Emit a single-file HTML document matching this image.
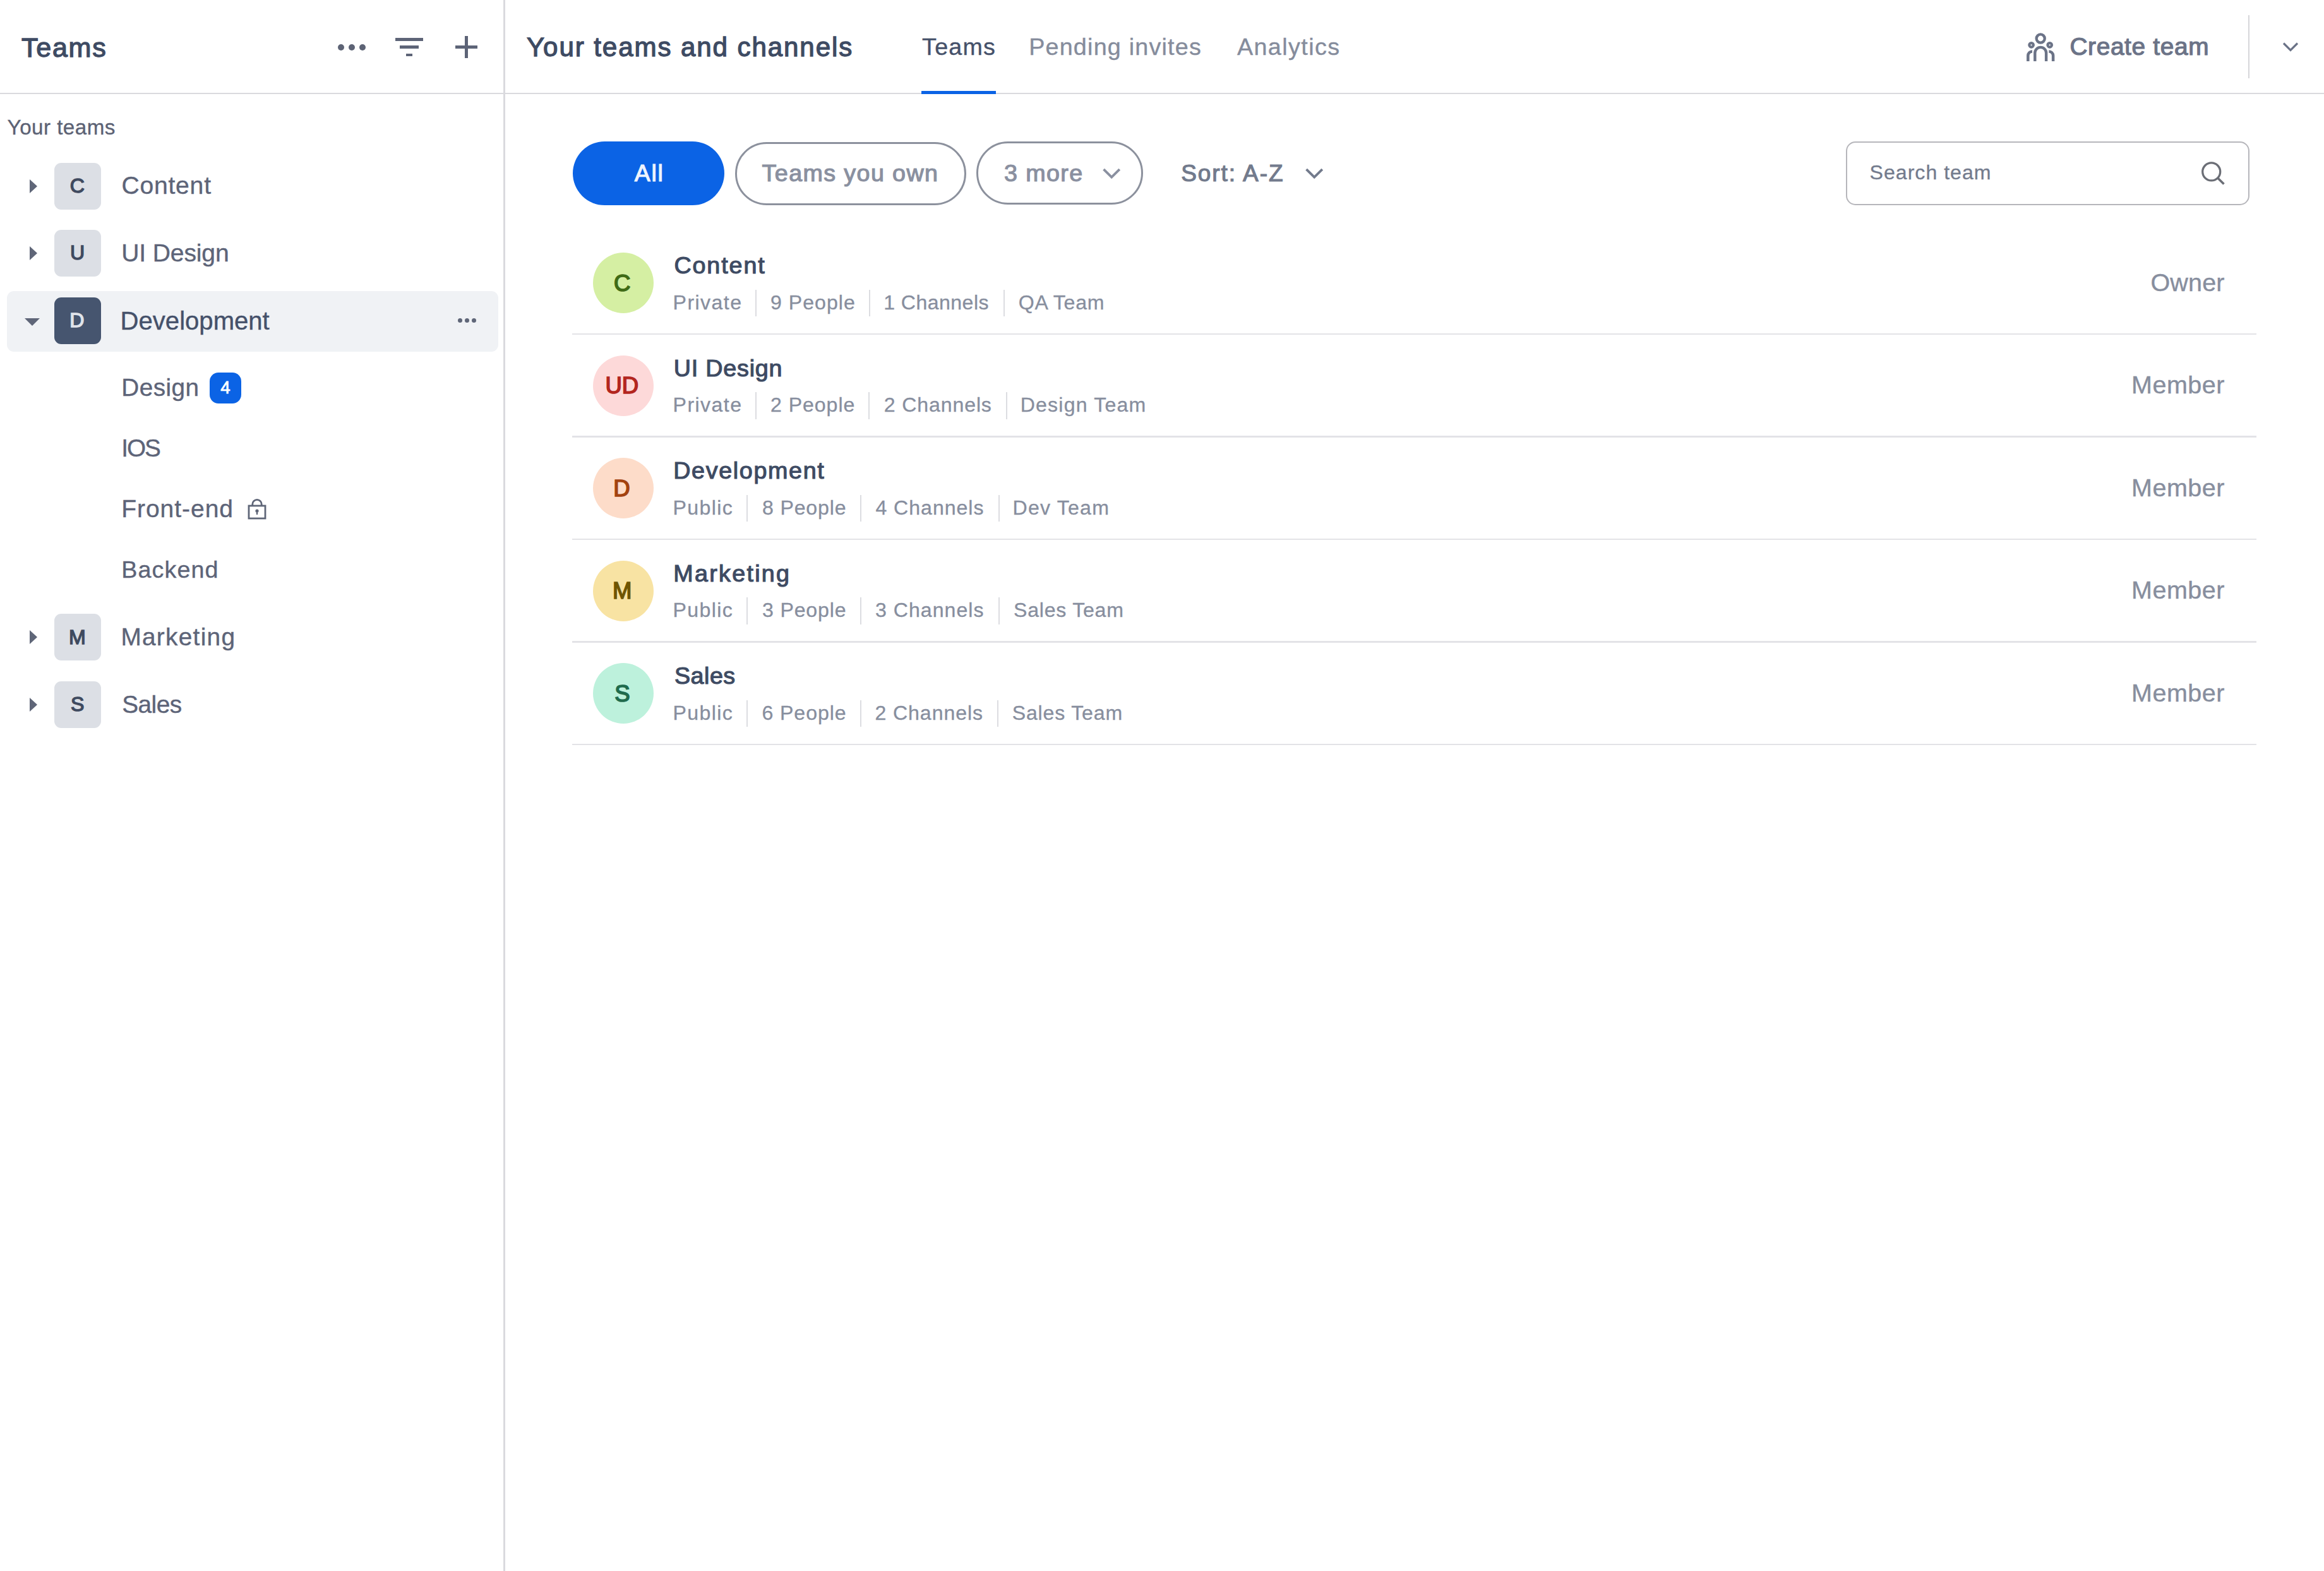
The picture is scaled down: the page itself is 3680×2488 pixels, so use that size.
<!DOCTYPE html>
<html><head><meta charset="utf-8">
<style>
html,body{margin:0;padding:0;background:#fff}
body{width:3680px;height:2488px;position:relative;overflow:hidden;font-family:"Liberation Sans",sans-serif}
.t{position:absolute;white-space:nowrap;display:block}
.a{position:absolute}
.sq{position:absolute;left:85.5px;width:74.3px;height:74.3px;border-radius:11px;background:#dcdfe5}
.tri{position:absolute;left:46.5px;width:0;height:0;border-top:11.5px solid transparent;border-bottom:11.5px solid transparent;border-left:12.5px solid #5f6678}
.av{position:absolute;left:939px;width:96px;height:96px;border-radius:50%}
.sep{position:absolute;width:2px;height:42.6px;background:#dcdde1}
.rl{position:absolute;left:906px;width:2667px;height:2.5px;background:#e3e3e7}
.dot{position:absolute;border-radius:50%;background:#5d6375}
.pill{position:absolute;box-sizing:border-box;border-radius:60px}
</style></head><body>
<!-- borders -->
<div class="a" style="left:0;top:146.5px;width:3680px;height:2.5px;background:#dadade"></div>
<div class="a" style="left:797.3px;top:0;width:2.5px;height:2488px;background:#dadade"></div>

<!-- sidebar header icons -->
<div class="dot" style="left:535.2px;top:69.6px;width:10px;height:10px"></div>
<div class="dot" style="left:552.2px;top:69.6px;width:10px;height:10px"></div>
<div class="dot" style="left:569.4px;top:69.6px;width:10px;height:10px"></div>
<div class="a" style="left:626px;top:60px;width:44px;height:4.8px;background:#5d6477"></div>
<div class="a" style="left:633px;top:72px;width:30px;height:4.8px;background:#5d6477"></div>
<div class="a" style="left:643px;top:84.6px;width:10px;height:4.8px;background:#5d6477"></div>
<div class="a" style="left:721px;top:72.2px;width:35px;height:4.8px;background:#5d6477"></div>
<div class="a" style="left:736.2px;top:57.4px;width:4.8px;height:34.4px;background:#5d6477"></div>

<!-- sidebar rows -->
<div class="tri" style="top:283.5px"></div>
<div class="sq" style="top:257.6px"></div>
<div class="tri" style="top:390px"></div>
<div class="sq" style="top:364px"></div>
<div class="a" style="left:11px;top:461px;width:778px;height:95.5px;border-radius:11px;background:#f0f2f5"></div>
<div class="a" style="left:38.6px;top:503.7px;width:0;height:0;border-left:12px solid transparent;border-right:12px solid transparent;border-top:12.7px solid #5f6678"></div>
<div class="sq" style="top:470.5px;background:#46556f"></div>
<div class="dot" style="left:725px;top:504.3px;width:7.2px;height:7.2px;background:#5f6678"></div>
<div class="dot" style="left:735.9px;top:504.3px;width:7.2px;height:7.2px;background:#5f6678"></div>
<div class="dot" style="left:746.8px;top:504.3px;width:7.2px;height:7.2px;background:#5f6678"></div>
<div class="a" style="left:332px;top:590.1px;width:50px;height:48.6px;border-radius:14px;background:#0b63e5"></div>
<svg class="a" style="left:390px;top:787px" width="34" height="38" viewBox="0 0 34 38">
  <path d="M9.8 13.5 V11.5 a7.2 7.2 0 0 1 14.4 0 V13.5" fill="none" stroke="#5f6678" stroke-width="2.8"/>
  <rect x="4" y="14" width="26" height="20" fill="none" stroke="#5f6678" stroke-width="2.8"/>
  <circle cx="17" cy="22" r="2.6" fill="#5f6678"/>
  <rect x="15.8" y="22" width="2.4" height="6" fill="#5f6678"/>
</svg>
<div class="tri" style="top:998px"></div>
<div class="sq" style="top:972.1px"></div>
<div class="tri" style="top:1104.5px"></div>
<div class="sq" style="top:1078.8px"></div>

<!-- main header -->
<div class="a" style="left:1458.6px;top:144px;width:118.4px;height:5.3px;background:#0b63e5"></div>
<svg class="a" style="left:3200px;top:45px" width="60" height="60" viewBox="0 0 60 60">
  <g fill="none" stroke="#6b7387">
    <circle cx="31.2" cy="16" r="6.55" stroke-width="4.3"/>
    <circle cx="16.6" cy="26.3" r="3.25" stroke-width="4.2"/>
    <circle cx="45.7" cy="26.3" r="3.25" stroke-width="4.2"/>
    <path d="M22.3 52 V38.75 A8.85 8.85 0 0 1 40.1 38.75 V52" stroke-width="4.4"/>
    <path d="M11.3 52 V43.1 A6.7 6.7 0 0 1 18 36.4" stroke-width="4.5"/>
    <path d="M51.1 52 V43.1 A6.7 6.7 0 0 0 44.4 36.4" stroke-width="4.5"/>
  </g>
</svg>
<div class="a" style="left:3560px;top:24px;width:2.2px;height:100px;background:#d6d6da"></div>
<svg class="a" style="left:3613px;top:64px" width="28" height="20" viewBox="0 0 28 20">
  <path d="M3 4.5 L14 15.5 L25 4.5" fill="none" stroke="#6b7387" stroke-width="3.2"/>
</svg>

<!-- filters -->
<div class="pill" style="left:906.8px;top:224px;width:240px;height:101px;background:#0b63e5"></div>
<div class="pill" style="left:1163.5px;top:224.5px;width:366.5px;height:100.2px;border:3px solid #8c919d"></div>
<div class="pill" style="left:1546px;top:224.2px;width:264px;height:100.2px;border:3px solid #8c919d"></div>
<svg class="a" style="left:1743px;top:262px" width="34" height="26" viewBox="0 0 34 26">
  <path d="M4.6 6.2 L17.2 18.6 L29.8 6.2" fill="none" stroke="#8a90a0" stroke-width="3.9"/>
</svg>
<svg class="a" style="left:2064px;top:262px" width="34" height="26" viewBox="0 0 34 26">
  <path d="M4.6 6.2 L17.2 18.6 L29.8 6.2" fill="none" stroke="#727a8c" stroke-width="3.9"/>
</svg>
<div class="a" style="left:2923.4px;top:223.8px;width:638.5px;height:101.2px;box-sizing:border-box;border:2.6px solid #b6b6bb;border-radius:15px"></div>
<svg class="a" style="left:3480px;top:250px" width="48" height="48" viewBox="0 0 48 48">
  <circle cx="21.7" cy="21.9" r="14" fill="none" stroke="#6b6e76" stroke-width="3.3"/>
  <path d="M31.8 32 L41.5 41.5" fill="none" stroke="#6b6e76" stroke-width="3.6"/>
</svg>

<div class="av" style="top:400.0px;background:#d5efa3"></div>
<div class="sep" style="left:1196.2px;top:458.6px"></div>
<div class="sep" style="left:1375.5px;top:458.6px"></div>
<div class="sep" style="left:1588.8px;top:458.6px"></div>
<div class="rl" style="top:527.6px"></div>
<div class="av" style="top:562.5px;background:#fdd9d9"></div>
<div class="sep" style="left:1196.3px;top:621.1px"></div>
<div class="sep" style="left:1375.3px;top:621.1px"></div>
<div class="sep" style="left:1592.9px;top:621.1px"></div>
<div class="rl" style="top:690.1px"></div>
<div class="av" style="top:725.0px;background:#fddcc9"></div>
<div class="sep" style="left:1182.2px;top:783.6px"></div>
<div class="sep" style="left:1361.6px;top:783.6px"></div>
<div class="sep" style="left:1581.2px;top:783.6px"></div>
<div class="rl" style="top:852.6px"></div>
<div class="av" style="top:887.5px;background:#f8e3a3"></div>
<div class="sep" style="left:1182.2px;top:946.1px"></div>
<div class="sep" style="left:1361.6px;top:946.1px"></div>
<div class="sep" style="left:1581.2px;top:946.1px"></div>
<div class="rl" style="top:1015.1px"></div>
<div class="av" style="top:1050.0px;background:#bdf1dc"></div>
<div class="sep" style="left:1182.2px;top:1108.6px"></div>
<div class="sep" style="left:1361.6px;top:1108.6px"></div>
<div class="sep" style="left:1579.1px;top:1108.6px"></div>
<div class="rl" style="top:1177.6px"></div>
<span class="t" style="left:34.0px;top:54.4px;font-size:43.10px;line-height:43.10px;color:#3e4b63;letter-spacing:1.69px;-webkit-text-stroke:1.34px #3e4b63">Teams</span>
<span class="t" style="left:11.6px;top:185.2px;font-size:33.20px;line-height:33.20px;color:#5c6274;letter-spacing:0.46px;-webkit-text-stroke:0.33px #5c6274">Your teams</span>
<span class="t" style="left:192.4px;top:274.4px;font-size:39.10px;line-height:39.10px;color:#5d6478;letter-spacing:0.79px;-webkit-text-stroke:0.39px #5d6478">Content</span>
<span class="t" style="left:192.3px;top:380.8px;font-size:39.10px;line-height:39.10px;color:#5d6478;letter-spacing:-0.15px;-webkit-text-stroke:0.39px #5d6478">UI Design</span>
<span class="t" style="left:190.6px;top:487.8px;font-size:40.10px;line-height:40.10px;color:#45516a;-webkit-text-stroke:0.40px #45516a">Development</span>
<span class="t" style="left:192.3px;top:595.3px;font-size:38.70px;line-height:38.70px;color:#5d6478;letter-spacing:0.47px;-webkit-text-stroke:0.39px #5d6478">Design</span>
<span class="t" style="left:192.3px;top:691.3px;font-size:38.70px;line-height:38.70px;color:#5d6478;letter-spacing:-2.10px;-webkit-text-stroke:0.39px #5d6478">IOS</span>
<span class="t" style="left:192.2px;top:786.4px;font-size:39.00px;line-height:39.00px;color:#5d6478;letter-spacing:0.97px;-webkit-text-stroke:0.39px #5d6478">Front-end</span>
<span class="t" style="left:192.3px;top:884.2px;font-size:37.70px;line-height:37.70px;color:#5d6478;letter-spacing:1.08px;-webkit-text-stroke:0.38px #5d6478">Backend</span>
<span class="t" style="left:191.4px;top:990.3px;font-size:38.80px;line-height:38.80px;color:#5d6478;letter-spacing:1.28px;-webkit-text-stroke:0.39px #5d6478">Marketing</span>
<span class="t" style="left:193.2px;top:1096.6px;font-size:38.80px;line-height:38.80px;color:#5d6478;letter-spacing:-0.53px;-webkit-text-stroke:0.39px #5d6478">Sales</span>
<span class="t" style="left:110.8px;top:278.0px;font-size:32.10px;line-height:32.10px;color:#3f4a5f;-webkit-text-stroke:1.44px #3f4a5f">C</span>
<span class="t" style="left:111.1px;top:384.3px;font-size:32.10px;line-height:32.10px;color:#3f4a5f;-webkit-text-stroke:1.44px #3f4a5f">U</span>
<span class="t" style="left:110.3px;top:490.6px;font-size:32.10px;line-height:32.10px;color:#dfe3ea;-webkit-text-stroke:1.44px #dfe3ea">D</span>
<span class="t" style="left:109.1px;top:992.5px;font-size:32.10px;line-height:32.10px;color:#3f4a5f;-webkit-text-stroke:1.44px #3f4a5f">M</span>
<span class="t" style="left:112.1px;top:1099.1px;font-size:32.10px;line-height:32.10px;color:#3f4a5f;-webkit-text-stroke:1.44px #3f4a5f">S</span>
<span class="t" style="left:349.3px;top:600.2px;font-size:27.70px;line-height:27.70px;color:#ffffff;-webkit-text-stroke:0.86px #ffffff">4</span>
<span class="t" style="left:834.0px;top:54.3px;font-size:42.10px;line-height:42.10px;color:#3e4b63;letter-spacing:1.90px;-webkit-text-stroke:1.31px #3e4b63">Your teams and channels</span>
<span class="t" style="left:1460.1px;top:56.4px;font-size:37.70px;line-height:37.70px;color:#45516a;letter-spacing:1.21px;-webkit-text-stroke:0.38px #45516a">Teams</span>
<span class="t" style="left:1629.2px;top:56.4px;font-size:37.70px;line-height:37.70px;color:#858c9c;letter-spacing:1.21px;-webkit-text-stroke:0.38px #858c9c">Pending invites</span>
<span class="t" style="left:1958.9px;top:56.4px;font-size:37.70px;line-height:37.70px;color:#858c9c;letter-spacing:1.42px;-webkit-text-stroke:0.38px #858c9c">Analytics</span>
<span class="t" style="left:3277.4px;top:55.3px;font-size:38.80px;line-height:38.80px;color:#6b7387;letter-spacing:0.66px;-webkit-text-stroke:1.20px #6b7387">Create team</span>
<span class="t" style="left:1004.7px;top:256.2px;font-size:37.40px;line-height:37.40px;color:#eef3fd;letter-spacing:1.82px;-webkit-text-stroke:1.16px #eef3fd">All</span>
<span class="t" style="left:1206.6px;top:256.2px;font-size:37.70px;line-height:37.70px;color:#8a90a0;letter-spacing:1.38px;-webkit-text-stroke:1.17px #8a90a0">Teams you own</span>
<span class="t" style="left:1590.1px;top:255.9px;font-size:37.70px;line-height:37.70px;color:#8a90a0;letter-spacing:1.36px;-webkit-text-stroke:1.17px #8a90a0">3 more</span>
<span class="t" style="left:1870.2px;top:255.9px;font-size:37.00px;line-height:37.00px;color:#727a8c;letter-spacing:1.92px;-webkit-text-stroke:1.15px #727a8c">Sort: A-Z</span>
<span class="t" style="left:2960.6px;top:257.4px;font-size:32.10px;line-height:32.10px;color:#737b8d;letter-spacing:1.00px;-webkit-text-stroke:0.32px #737b8d">Search team</span>
<span class="t" style="left:971.9px;top:430.6px;font-size:36.60px;line-height:36.60px;color:#3f6b16;-webkit-text-stroke:1.65px #3f6b16">C</span>
<span class="t" style="left:1067.4px;top:402.4px;font-size:37.70px;line-height:37.70px;color:#3e4b63;letter-spacing:1.90px;-webkit-text-stroke:1.17px #3e4b63">Content</span>
<span class="t" style="left:1065.6px;top:462.6px;font-size:32.10px;line-height:32.10px;color:#878e9e;letter-spacing:1.43px;-webkit-text-stroke:0.32px #878e9e">Private</span>
<span class="t" style="left:1219.9px;top:462.6px;font-size:32.10px;line-height:32.10px;color:#878e9e;letter-spacing:1.04px;-webkit-text-stroke:0.32px #878e9e">9 People</span>
<span class="t" style="left:1399.2px;top:462.6px;font-size:32.10px;line-height:32.10px;color:#878e9e;letter-spacing:0.45px;-webkit-text-stroke:0.32px #878e9e">1 Channels</span>
<span class="t" style="left:1612.7px;top:462.6px;font-size:32.10px;line-height:32.10px;color:#878e9e;letter-spacing:0.74px;-webkit-text-stroke:0.32px #878e9e">QA Team</span>
<span class="t" style="left:3405.5px;top:427.8px;font-size:39.50px;line-height:39.50px;color:#878e9e;letter-spacing:0.15px;-webkit-text-stroke:0.40px #878e9e">Owner</span>
<span class="t" style="left:958.4px;top:593.1px;font-size:36.60px;line-height:36.60px;color:#b3261e;-webkit-text-stroke:1.65px #b3261e">UD</span>
<span class="t" style="left:1066.8px;top:564.9px;font-size:37.70px;line-height:37.70px;color:#3e4b63;letter-spacing:0.78px;-webkit-text-stroke:1.17px #3e4b63">UI Design</span>
<span class="t" style="left:1065.6px;top:625.1px;font-size:32.10px;line-height:32.10px;color:#878e9e;letter-spacing:1.43px;-webkit-text-stroke:0.32px #878e9e">Private</span>
<span class="t" style="left:1220.1px;top:625.1px;font-size:32.10px;line-height:32.10px;color:#878e9e;letter-spacing:0.94px;-webkit-text-stroke:0.32px #878e9e">2 People</span>
<span class="t" style="left:1399.8px;top:625.1px;font-size:32.10px;line-height:32.10px;color:#878e9e;letter-spacing:0.87px;-webkit-text-stroke:0.32px #878e9e">2 Channels</span>
<span class="t" style="left:1615.7px;top:625.1px;font-size:32.10px;line-height:32.10px;color:#878e9e;letter-spacing:1.20px;-webkit-text-stroke:0.32px #878e9e">Design Team</span>
<span class="t" style="left:3375.0px;top:590.3px;font-size:39.50px;line-height:39.50px;color:#878e9e;letter-spacing:0.52px;-webkit-text-stroke:0.40px #878e9e">Member</span>
<span class="t" style="left:971.3px;top:755.6px;font-size:36.60px;line-height:36.60px;color:#a3420f;-webkit-text-stroke:1.65px #a3420f">D</span>
<span class="t" style="left:1066.2px;top:727.4px;font-size:37.70px;line-height:37.70px;color:#3e4b63;letter-spacing:1.65px;-webkit-text-stroke:1.17px #3e4b63">Development</span>
<span class="t" style="left:1065.6px;top:787.6px;font-size:32.10px;line-height:32.10px;color:#878e9e;letter-spacing:1.37px;-webkit-text-stroke:0.32px #878e9e">Public</span>
<span class="t" style="left:1206.9px;top:787.6px;font-size:32.10px;line-height:32.10px;color:#878e9e;letter-spacing:0.87px;-webkit-text-stroke:0.32px #878e9e">8 People</span>
<span class="t" style="left:1386.4px;top:787.6px;font-size:32.10px;line-height:32.10px;color:#878e9e;letter-spacing:0.98px;-webkit-text-stroke:0.32px #878e9e">4 Channels</span>
<span class="t" style="left:1603.6px;top:787.6px;font-size:32.10px;line-height:32.10px;color:#878e9e;letter-spacing:1.21px;-webkit-text-stroke:0.32px #878e9e">Dev Team</span>
<span class="t" style="left:3375.0px;top:752.8px;font-size:39.50px;line-height:39.50px;color:#878e9e;letter-spacing:0.52px;-webkit-text-stroke:0.40px #878e9e">Member</span>
<span class="t" style="left:969.9px;top:918.1px;font-size:36.60px;line-height:36.60px;color:#6f5500;-webkit-text-stroke:1.65px #6f5500">M</span>
<span class="t" style="left:1066.2px;top:889.9px;font-size:37.70px;line-height:37.70px;color:#3e4b63;letter-spacing:2.30px;-webkit-text-stroke:1.17px #3e4b63">Marketing</span>
<span class="t" style="left:1065.6px;top:950.1px;font-size:32.10px;line-height:32.10px;color:#878e9e;letter-spacing:1.37px;-webkit-text-stroke:0.32px #878e9e">Public</span>
<span class="t" style="left:1206.9px;top:950.1px;font-size:32.10px;line-height:32.10px;color:#878e9e;letter-spacing:0.87px;-webkit-text-stroke:0.32px #878e9e">3 People</span>
<span class="t" style="left:1385.9px;top:950.1px;font-size:32.10px;line-height:32.10px;color:#878e9e;letter-spacing:1.03px;-webkit-text-stroke:0.32px #878e9e">3 Channels</span>
<span class="t" style="left:1605.1px;top:950.1px;font-size:32.10px;line-height:32.10px;color:#878e9e;letter-spacing:0.75px;-webkit-text-stroke:0.32px #878e9e">Sales Team</span>
<span class="t" style="left:3375.0px;top:915.3px;font-size:39.50px;line-height:39.50px;color:#878e9e;letter-spacing:0.52px;-webkit-text-stroke:0.40px #878e9e">Member</span>
<span class="t" style="left:973.3px;top:1080.6px;font-size:36.60px;line-height:36.60px;color:#206b4c;-webkit-text-stroke:1.65px #206b4c">S</span>
<span class="t" style="left:1068.0px;top:1052.4px;font-size:37.70px;line-height:37.70px;color:#3e4b63;letter-spacing:0.47px;-webkit-text-stroke:1.17px #3e4b63">Sales</span>
<span class="t" style="left:1065.6px;top:1112.6px;font-size:32.10px;line-height:32.10px;color:#878e9e;letter-spacing:1.37px;-webkit-text-stroke:0.32px #878e9e">Public</span>
<span class="t" style="left:1206.4px;top:1112.6px;font-size:32.10px;line-height:32.10px;color:#878e9e;letter-spacing:0.94px;-webkit-text-stroke:0.32px #878e9e">6 People</span>
<span class="t" style="left:1385.4px;top:1112.6px;font-size:32.10px;line-height:32.10px;color:#878e9e;letter-spacing:0.93px;-webkit-text-stroke:0.32px #878e9e">2 Channels</span>
<span class="t" style="left:1602.7px;top:1112.6px;font-size:32.10px;line-height:32.10px;color:#878e9e;letter-spacing:0.83px;-webkit-text-stroke:0.32px #878e9e">Sales Team</span>
<span class="t" style="left:3375.0px;top:1077.8px;font-size:39.50px;line-height:39.50px;color:#878e9e;letter-spacing:0.52px;-webkit-text-stroke:0.40px #878e9e">Member</span>
</body></html>
